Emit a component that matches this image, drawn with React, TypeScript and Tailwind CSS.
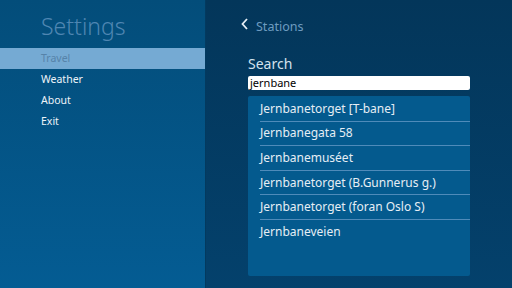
import React from 'react';

const menu = ['Travel', 'Weather', 'About', 'Exit'];

const stations = [
  'Jernbanetorget [T-bane]',
  'Jernbanegata 58',
  'Jernbanemuséet',
  'Jernbanetorget (B.Gunnerus g.)',
  'Jernbanetorget (foran Oslo S)',
  'Jernbaneveien',
];

const App = () => {
  return (
    <div className="flex w-[512px] h-[288px] overflow-hidden font-['Noto_Sans',sans-serif]">
      <aside className="w-[205px] h-full bg-gradient-to-b from-[#034d7a] to-[#045c93] pt-[11px]">
        <h1 className="pl-[41px] text-[23px] leading-[30px] font-light text-[#4f86b2]">Settings</h1>
        <ul className="mt-[7px]">
          {menu.map((item, i) => (
            <li
              key={item}
              className={`pl-[41px] flex items-center text-[10.5px] ${
                i === 0 ? 'bg-[#75aad3] text-[#5683a9] h-[21px]' : 'text-[#eef4f9] h-[20px] mt-[1px]'
              }`}
            >
              {item}
            </li>
          ))}
        </ul>
      </aside>
      <main className="flex-1 h-full border-l border-[#033a5f] bg-gradient-to-b from-[#03365a] to-[#04416c] pl-[42px] pr-[42px]">
        <div className="flex items-center mt-[17px] h-[20px]">
          <svg width="8" height="12" viewBox="0 0 8 12" className="ml-[-7px] mt-[-6px]">
            <path d="M6 1 L1.5 6 L6 11" stroke="#e6eef5" strokeWidth="1.8" fill="none" />
          </svg>
          <span className="ml-[7px] text-[12.5px] text-[#6e9cc0]">Stations</span>
        </div>
        <div className="mt-[18px] text-[14px] leading-[18px] text-[#d3e2ee]">Search</div>
        <div className="mt-[3px] h-[14px] bg-white rounded-[2px] flex items-center px-[2px] text-[11px] text-black">
          jernbane
        </div>
        <ul className="mt-[6px] h-[180px] bg-[#045a8e] rounded-[2px] pl-[12px] pt-[1px]">
          {stations.map((s, i) => (
            <li
              key={s}
              className={`h-[24.6px] flex items-center text-[12px] text-[#e6eef5] ${
                i < stations.length - 1 ? 'border-b border-[#4f8bba]' : ''
              }`}
            >
              {s}
            </li>
          ))}
        </ul>
      </main>
    </div>
  );
};

export default App;
